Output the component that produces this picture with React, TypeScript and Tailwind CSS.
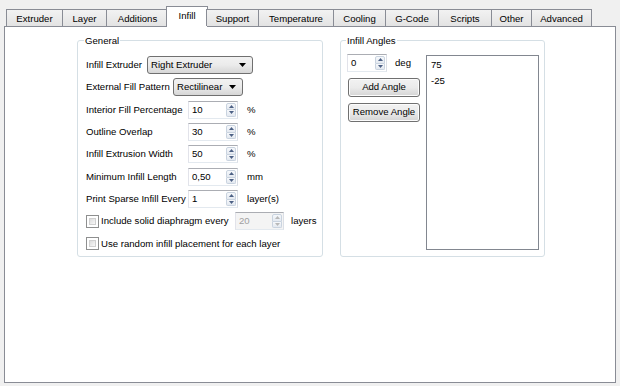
import React from "react";

const tabs = [
  { name: "Extruder", w: 56 },
  { name: "Layer", w: 44 },
  { name: "Additions", w: 62 },
  { name: "Infill", w: 38 },
  { name: "Support", w: 52 },
  { name: "Temperature", w: 75 },
  { name: "Cooling", w: 52 },
  { name: "G-Code", w: 53 },
  { name: "Scripts", w: 53 },
  { name: "Other", w: 40 },
  { name: "Advanced", w: 61 },
];

function SpinArrows({ disabled }: { disabled?: boolean }) {
  const c = disabled ? "#b8b8b8" : "#4d6185";
  return (
    <div className="flex flex-col w-[11px] h-full py-[1px] pr-[1px] shrink-0">
      <div className="flex-1 flex items-center justify-center border border-[#c9d3df] bg-gradient-to-b from-[#f6f8fb] to-[#e4e9f0] rounded-t-[2px]">
        <svg width="5" height="3" viewBox="0 0 5 3">
          <path d="M2.5 0 L5 3 L0 3 Z" fill={c} />
        </svg>
      </div>
      <div className="flex-1 flex items-center justify-center border border-t-0 border-[#c9d3df] bg-gradient-to-b from-[#f6f8fb] to-[#e4e9f0] rounded-b-[2px]">
        <svg width="5" height="3" viewBox="0 0 5 3">
          <path d="M0 0 L5 0 L2.5 3 Z" fill={c} />
        </svg>
      </div>
    </div>
  );
}

function Spin({ value, w, disabled }: { value: string; w: number; disabled?: boolean }) {
  return (
    <div
      className={
        "shrink-0 flex items-stretch h-[18px] border border-[#abadb3] border-b-[#e3e9ef] border-r-[#dbdfe6] border-l-[#e2e3ea] " +
        (disabled ? "bg-[#f4f4f4] text-[#a0a0a0]" : "bg-white")
      }
      style={{ width: w }}
    >
      <div className="flex-1 flex items-center pl-[3px]">{value}</div>
      <SpinArrows disabled={disabled} />
    </div>
  );
}

function Combo({ value, w }: { value: string; w: number }) {
  return (
    <div
      className="shrink-0 flex items-center h-[18px] rounded-[3px] border border-[#707070] bg-gradient-to-b from-[#f2f2f2] via-[#ebebeb] to-[#d6d6d6] px-[3px]"
      style={{ width: w }}
    >
      <div className="flex-1 whitespace-nowrap">{value}</div>
      <svg width="7" height="4" viewBox="0 0 7 4" className="mr-[3px]">
        <path d="M0 0 L7 0 L3.5 4 Z" fill="#000" />
      </svg>
    </div>
  );
}

function Check() {
  return (
    <div className="shrink-0 w-[13px] h-[13px] border border-[#8e8f8f] bg-white p-[2px]">
      <div className="w-full h-full bg-gradient-to-br from-[#dcdcdc] to-[#f8f8f8] border border-[#d0d0d0]" />
    </div>
  );
}

function Button({ label }: { label: string }) {
  return (
    <div className="w-[72px] h-[19px] rounded-[3px] border border-[#707070] bg-gradient-to-b from-[#f2f2f2] via-[#ebebeb] to-[#d4d4d4] flex items-center justify-center whitespace-nowrap shadow-[inset_0_0_0_1px_#fcfcfc]">
      {label}
    </div>
  );
}

const spinRows = [
  { label: "Interior Fill Percentage", value: "10", unit: "%", h: 24 },
  { label: "Outline Overlap", value: "30", unit: "%", h: 21 },
  { label: "Infill Extrusion Width", value: "50", unit: "%", h: 23 },
  { label: "Minimum Infill Length", value: "0,50", unit: "mm", h: 23 },
  { label: "Print Sparse Infill Every", value: "1", unit: "layer(s)", h: 21 },
];

export default function App() {
  return (
    <div
      className="w-[620px] h-[386px] bg-[#f0f0f0] pt-[6px] px-[4px] text-[9.6px] text-black leading-none whitespace-nowrap"
      style={{ fontFamily: '"Liberation Sans", Arial, sans-serif' }}
    >
      <div className="flex items-end h-[20px] pl-[2px] relative z-10">
        {tabs.map((t) => {
          const sel = t.name === "Infill";
          return sel ? (
            <div
              key={t.name}
              className="h-[21px] -mb-px -mx-[2px] bg-white border border-b-0 border-[#898c95] flex items-center justify-center pb-[2px]"
              style={{ width: t.w + 4 }}
            >
              {t.name}
            </div>
          ) : (
            <div
              key={t.name}
              className="h-[17px] border border-b-0 border-r-0 last:border-r border-[#898c95] bg-gradient-to-b from-[#f2f2f2] to-[#e3e3e3] flex items-center justify-center pt-[1px]"
              style={{ width: t.w }}
            >
              {t.name}
            </div>
          );
        })}
      </div>
      <div className="h-[357px] bg-white border border-[#898c95] flex gap-[17px] pl-[72px] pt-[9px]">
        <fieldset className="min-w-0 w-[246px] h-[221px] border border-[#d5dfe5] rounded-[3px] px-[8px]">
          <legend className="-ml-[2px] px-[1px]">General</legend>
          <div className="flex flex-col pt-[8px]">
            <div className="h-[22px] flex items-center">
              <span className="w-[61px] shrink-0">Infill Extruder</span>
              <Combo value="Right Extruder" w={106} />
            </div>
            <div className="h-[22px] flex items-center">
              <span className="w-[87px] shrink-0">External Fill Pattern</span>
              <Combo value="Rectilinear" w={70} />
            </div>
            {spinRows.map((r) => (
              <div key={r.label} className="flex items-center" style={{ height: r.h }}>
                <span className="w-[102px] shrink-0">{r.label}</span>
                <Spin value={r.value} w={50} />
                <span className="ml-[9px]">{r.unit}</span>
              </div>
            ))}
            <div className="h-[23px] flex items-center">
              <Check />
              <span className="ml-[2px] w-[134px] shrink-0">Include solid diaphragm every</span>
              <Spin value="20" w={49} disabled />
              <span className="ml-[7px]">layers</span>
            </div>
            <div className="h-[22px] flex items-center">
              <Check />
              <span className="ml-[2px]">Use random infill placement for each layer</span>
            </div>
          </div>
        </fieldset>
        <fieldset className="min-w-0 w-[205px] h-[221px] border border-[#d5dfe5] rounded-[3px] px-[6px]">
          <legend className="-ml-[1px] px-[1px]">Infill Angles</legend>
          <div className="flex gap-[6px] pt-[9px]">
            <div className="w-[73px] shrink-0 flex flex-col">
              <div className="flex items-center h-[17px]">
                <Spin value="0" w={40} />
                <span className="ml-[8px]">deg</span>
              </div>
              <div className="flex flex-col gap-[6px] mt-[6px] pl-[1px]">
                <Button label="Add Angle" />
                <Button label="Remove Angle" />
              </div>
            </div>
            <div className="w-[113px] shrink-0 h-[195px] border border-[#828790] bg-white px-[4px] pt-[4px] flex flex-col gap-[7px]">
              <div>75</div>
              <div>-25</div>
            </div>
          </div>
        </fieldset>
      </div>
    </div>
  );
}
